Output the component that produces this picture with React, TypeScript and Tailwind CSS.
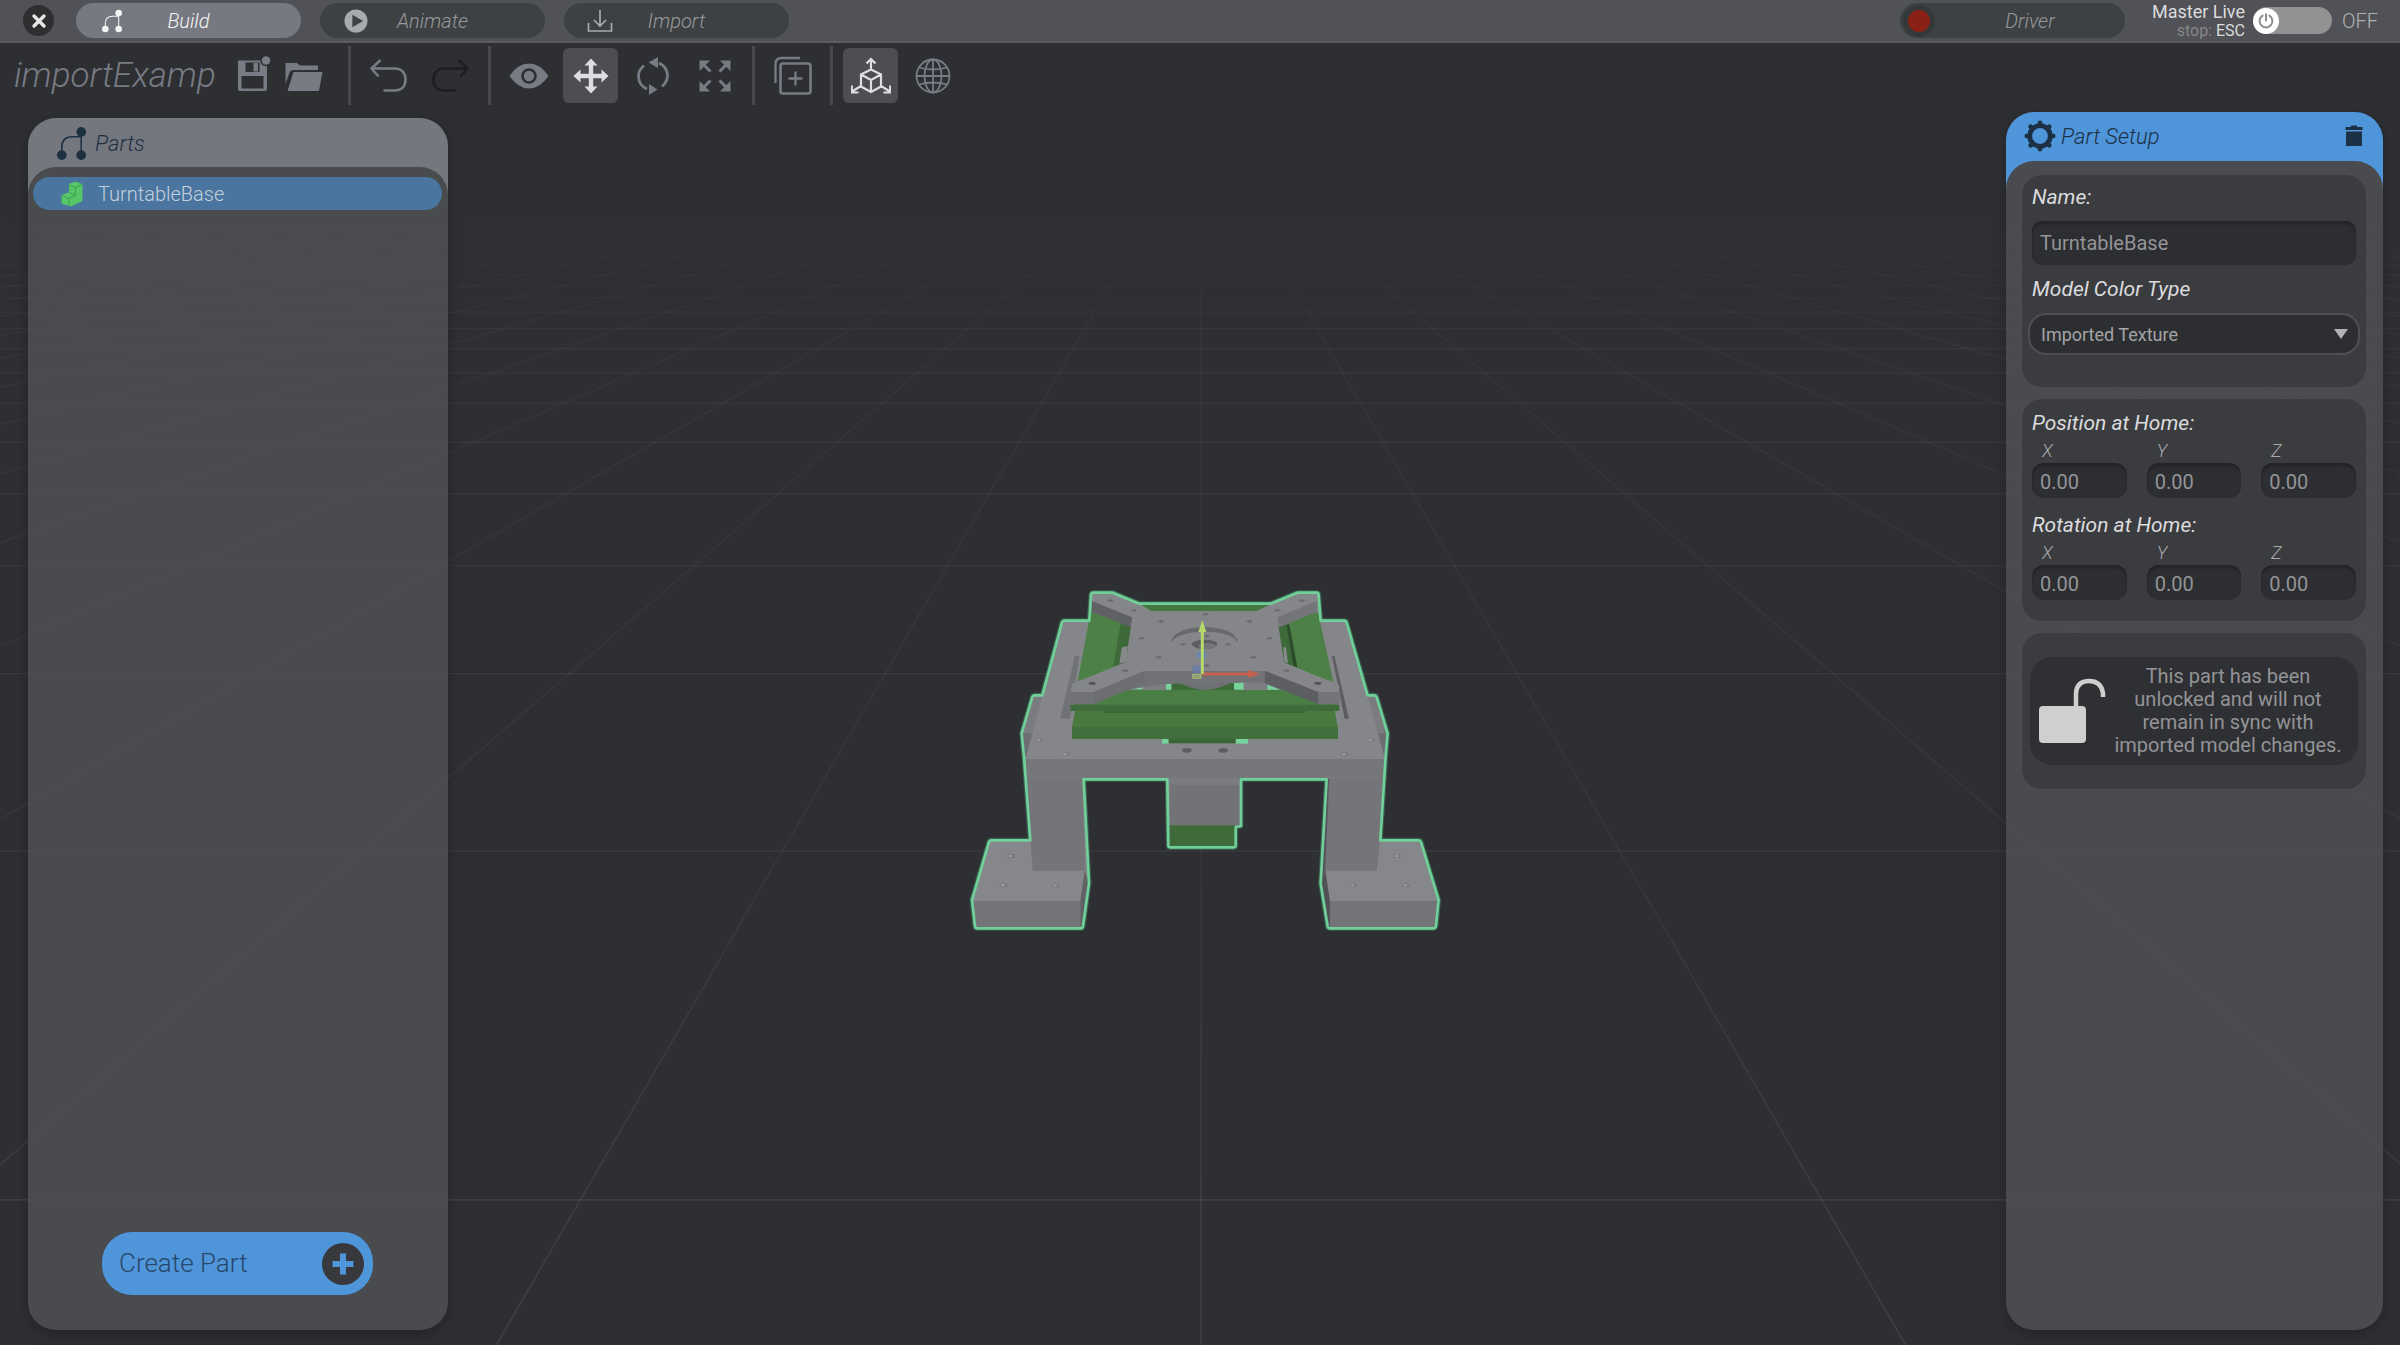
import React, { useId, useState } from "react";

const GRID_ROWS = Array.from({ length: 34 }, (_, n) => 128 + 1 / (0.000933 + 0.00045 * n));
const GRID_COLS = Array.from({ length: 41 }, (_, i) => i - 20);

const PLATE_HOLES = [
  [480, 92], [1054, 92], [550, 121], [980, 121], [765, 133], [632, 154], [897, 154],
  [573, 205], [957, 205], [698, 223], [832, 223], [625, 262], [908, 262], [525, 302],
  [1008, 302], [768, 287], [768, 198],
];

const FOOT_HOLES = [
  [183, 858], [161, 946], [317, 946], [1343, 858], [1210, 946], [1368, 946],
  [267, 511], [347, 553], [1263, 511], [1184, 553],
];

const OUTLINE =
  "M430 68H488L568 101H962L1042 68H1099Q1106 68 1106 75L1112 152H1183Q1188 152 1190 157L1253 376H1273Q1278 376 1280 381L1313 490L1307 560L1291 811H1406Q1411 811 1413 816L1466 990L1458 1068Q1457 1075 1450 1075H1140Q1134 1075 1133 1069L1112 940L1130 628H873V768L857 771V826Q857 832 851 832H661Q655 832 655 826L652 628H401L417 940L399 1069Q398 1075 392 1075H82Q76 1075 75 1069L66 990L117 816Q119 811 124 811H241L222 560L215 490L247 381Q249 376 254 376H277L336 157Q338 152 343 152H418L423 75Q424 68 430 68Z";

function Model() {
  return (
    <g transform="translate(950 570) scale(0.3333)">
      <path d={OUTLINE} fill="none" stroke="#4fbf7d" strokeWidth="15" strokeLinejoin="round" opacity="0.35" />
      <path d={OUTLINE} fill="#808184" />
      {/* Feet */}
      <path d="M119 811H250V902H404L391 993H66Z" fill="#86878a" />
      <path d="M1411 811H1280V902H1126L1140 993H1466Z" fill="#86878a" />
      <path d="M68 993H391V1075H76Z" fill="#737477" />
      <path d="M1140 993H1464L1457 1075H1140Z" fill="#737477" />
      <path d="M404 902L417 940L398 1075H391V993Z" fill="#606165" />
      <path d="M1126 902L1140 993V1075H1135L1112 940Z" fill="#505155" />
      {/* Legs */}
      <path d="M228 624H397L405 902H248L241 811Z" fill="#747578" />
      <path d="M1138 624H1304L1291 811L1280 902H1126Z" fill="#747578" />
      <path d="M1130 624H1138L1126 902L1115 940Z" fill="#55565a" />
      {/* Deck */}
      <path d="M249 376H277L228 560L215 490Z" fill="#7b7c7f" />
      <path d="M1253 376H1278L1313 490L1305 560Z" fill="#7b7c7f" />
      <path d="M218 490H247L228 560H222Z" fill="#6c6d70" />
      <path d="M1283 490H1311L1306 560H1300Z" fill="#6c6d70" />
      <path d="M338 152H1188L1305 567H228Z" fill="#858689" />
      <path d="M228 567H1305L1303 626H230Z" fill="#757679" />
      <path d="M230 624H1303" stroke="#808184" strokeWidth="2" />
      <path d="M375 257H388L360 446H330Z" fill="#717275" />
      <path d="M1146 257H1153L1197 446H1184Z" fill="#5b5c60" />
      {/* Rear rail and side rails */}
      <path d="M568 104H962L920 125H604Z" fill="#467640" />
      <path d="M422 126L545 165L505 285L382 340Z" fill="#4d8046" />
      <path d="M512 158L545 165L530 275L490 290Z" fill="#3d6a38" />
      <path d="M1104 126L985 165L1010 285L1150 336Z" fill="#4d8046" />
      <path d="M985 168L1018 160L1042 292L1003 278Z" fill="#3d6a38" />
      <path d="M1010 165H1018L1042 292L1030 288Z" fill="#2c4c2b" />
      <path d="M516 232L533 228L528 276L508 280Z" fill="#88898c" />
      <path d="M1000 232H1008L1014 280L1003 276Z" fill="#88898c" />
      {/* Carriage below the plate */}
      <path d="M540 335H1000V360H540Z" fill="#7d7e81" />
      <path d="M664 337H852V360H664Z" fill="#3d6a38" />
      <path d="M690 340H840Q800 360 765 360T690 340Z" fill="#6f7073" />
      <g fill="#74d49c">
        <path d="M545 358L578 342V358Z" />
        <path d="M648 337H664V359H648Z" />
        <path d="M852 337H881V359H852Z" />
        <path d="M952 344L990 359H952Z" />
        <path d="M636 506H656V521H636Z" />
        <path d="M857 506H894V521H857Z" />
      </g>
      {/* Front rail */}
      <path d="M510 360H1020L1168 405H362Z" fill="#4b7e44" />
      <path d="M362 404H1168V423H362Z" fill="#3f6c3a" />
      <path d="M375 423H1155L1163 471H366Z" fill="#49793f" />
      <path d="M455 424H1072L1060 429H465Z" fill="#3b6536" />
      <path d="M366 470H1164V507H366Z" fill="#42703c" />
      <path d="M656 507H857V520H656Z" fill="#3b6535" />
      {/* Top plate */}
      <path d="M425 92V126L545 172L547 142Z" fill="#606165" />
      <path d="M1101 92V126L988 172L982 142Z" fill="#747578" />
      <path d="M584 302H944V336Q855 338 830 341H690Q660 337 520 362Z" fill="#727376" />
      <path d="M425 92L430 71H488L568 101L604 123H920L962 103L1042 71H1100L1101 92L982 142L1000 277L1168 346V368L1105 366L944 302H584L430 366L361 368L366 341L527 277L547 142Z" fill="#85868a" />
      <path d="M361 366H430V403H361Z" fill="#717275" />
      <path d="M430 366L584 302V339L430 403Z" fill="#6d6e71" />
      <path d="M1105 366H1169V403H1105Z" fill="#747578" />
      <path d="M944 302L1105 366V403L944 339Z" fill="#5d5e62" />
      <path d="M667 214C667 158 861 158 861 214C840 176 690 176 667 214Z" fill="#68696c" />
      <path d="M667 206V214M861 206V214" stroke="#5d5e62" strokeWidth="3" />
      <ellipse cx="764" cy="223" rx="38" ry="14" fill="#5c5d60" />
      <ellipse cx="772" cy="228" rx="26" ry="9" fill="#737477" />
      {PLATE_HOLES.map(([x, y]) => (
        <g key={`${x}-${y}`}>
          <ellipse cx={x} cy={y} rx="10" ry="4" fill="#77787b" />
          <ellipse cx={x + 3} cy={y} rx="6" ry="3" fill="#68696c" />
        </g>
      ))}
      <ellipse cx="427" cy="340" rx="11" ry="5" fill="#55565a" />
      <ellipse cx="1104" cy="340" rx="11" ry="5" fill="#55565a" />
      <ellipse cx="711" cy="541" rx="14" ry="7" fill="#5c5d60" />
      <ellipse cx="820" cy="541" rx="14" ry="7" fill="#5c5d60" />
      {FOOT_HOLES.map(([x, y]) => (
        <g key={`${x}-${y}`}>
          <ellipse cx={x} cy={y} rx="11" ry="6" fill="#77787b" />
          <ellipse cx={x - 2} cy={y} rx="6" ry="4" fill="#97989b" />
        </g>
      ))}
      {/* Motor block */}
      <path d="M656 626H873V645H660Z" fill="#7b7c7f" />
      <path d="M660 644H870V766H660Z" fill="#727376" />
      <path d="M658 766H855V830H658Z" fill="#3f6a39" />
      <path d={OUTLINE} fill="none" stroke="#70d09a" strokeWidth="8" strokeLinejoin="round" />
      {/* Move gizmo */}
      <path d="M741 244H768V265H741Z" fill="#5d86c4" opacity="0.6" />
      <path d="M728 287H755V309H728Z" fill="#6479b0" opacity="0.75" />
      <path d="M728 313H753V325H728Z" fill="#8f9f73" stroke="#bccb78" strokeWidth="2" />
      <path d="M757 312H900" stroke="#c4624f" strokeWidth="9" />
      <path d="M895 300L931 312L895 324Z" fill="#c4624f" />
      <path d="M757 312V180" stroke="#b4da6e" strokeWidth="9" />
      <path d="M745 186L757 150L769 186Z" fill="#b4da6e" />
    </g>
  );
}

function Viewport() {
  return (
    <svg
      className="absolute inset-0 h-full w-full"
      viewBox="0 0 2400 1345"
      preserveAspectRatio="xMidYMid slice"
      role="img"
      aria-label="3D view of TurntableBase"
    >
      <defs>
        <linearGradient id="fade" gradientUnits="userSpaceOnUse" x1="0" y1="210" x2="0" y2="1345">
          <stop offset="0" stopColor="#ffffff" stopOpacity="0" />
          <stop offset="0.12" stopColor="#ffffff" stopOpacity="0.04" />
          <stop offset="0.6" stopColor="#ffffff" stopOpacity="0.06" />
          <stop offset="1" stopColor="#ffffff" stopOpacity="0.12" />
        </linearGradient>
      </defs>
      <g fill="url(#fade)">
        {GRID_ROWS.map((y) => (
          <path key={y} d={`M0 ${y - 0.6}H2400V${y + 0.6}H0Z`} />
        ))}
        {GRID_COLS.map((k) => {
          const far = 1201 + k * 0.579 * 80;
          const near = 1201 + k * 0.579 * 1217;
          const half = 0.7 * Math.sqrt(1 + (k * 0.579) ** 2);
          return (
            <path
              key={k}
              fillOpacity="0.75"
              d={`M${far - half} 208L${far + half} 208L${near + half} 1345L${near - half} 1345Z`}
            />
          );
        })}
      </g>
      <Model />
    </svg>
  );
}

function NodesIcon({ className }: { className: string }) {
  return (
    <svg viewBox="0 0 30 36" className={className} aria-hidden="true">
      <path d="M5 30V22Q5 11 16 11H25M25 6V30" fill="none" stroke="currentColor" strokeWidth="1.6" />
      <circle cx="25" cy="6" r="5" fill="currentColor" />
      <circle cx="5" cy="30" r="5" fill="currentColor" />
      <circle cx="25" cy="30" r="5" fill="currentColor" />
    </svg>
  );
}

function ModeTab({ label, icon, active }: { label: string; icon: React.ReactNode; active?: boolean }) {
  return (
    <button
      type="button"
      aria-pressed={!!active}
      className={
        "grid h-[35px] w-[225px] grid-cols-[72px_1fr_72px] items-center rounded-full text-xl font-light italic " +
        (active ? "bg-[#777982] text-[#f4f4f5]" : "bg-[#3d4143] text-[#97999c]")
      }
    >
      <span className="flex justify-center">{icon}</span>
      <span>{label}</span>
    </button>
  );
}

function TopBar() {
  const [live, setLive] = useState(false);
  return (
    <header className="flex h-[43px] items-center gap-[19px] border-b-2 border-[#5b5c61] bg-[#515257] pr-[22px] pl-[23px]">
      <button
        type="button"
        aria-label="Close"
        className="mr-[3px] flex size-[31px] items-center justify-center rounded-full bg-[#2e2f31] text-[#e6e6e6]"
      >
        <svg viewBox="0 0 16 16" className="size-4" aria-hidden="true">
          <path d="M3 3L13 13M13 3L3 13" stroke="currentColor" strokeWidth="3.4" strokeLinecap="round" />
        </svg>
      </button>
      <nav aria-label="Mode" className="flex gap-[19px]">
        <ModeTab label="Build" active icon={<NodesIcon className="h-6 w-5" />} />
        <ModeTab
          label="Animate"
          icon={
            <svg viewBox="0 0 24 24" className="size-6" aria-hidden="true">
              <circle cx="12" cy="12" r="11.5" fill="#a9aaab" />
              <path d="M8.4 5.8L19 12L8.4 18.2Z" fill="#3d4143" />
            </svg>
          }
        />
        <ModeTab
          label="Import"
          icon={
            <svg viewBox="0 0 26 24" className="h-6 w-[26px]" fill="none" stroke="#a9aaab" strokeWidth="1.7" aria-hidden="true">
              <path d="M13 1V17M7 11L13 17L19 11M1.5 14V22H24.500V14" />
            </svg>
          }
        />
      </nav>
      <button
        type="button"
        className="mr-2 ml-auto flex h-[35px] w-[225px] items-center rounded-full bg-[#3d4143] pl-[3px] text-xl font-light text-[#97999c] italic"
      >
        <span className="flex size-8 items-center justify-center rounded-full bg-[#343839]">
          <span className="size-[22px] rounded-full bg-[#8b2114]" />
        </span>
        <span className="flex-1">Driver</span>
      </button>
      <label className="flex items-center gap-2">
        <span className="flex flex-col text-right">
          <span className="text-lg leading-5 text-[#dcdcdd]">Master Live</span>
          <span className="text-base leading-[18px] text-[#85868a]">
            stop: <span className="text-[#dcdcdd]">ESC</span>
          </span>
        </span>
        <input
          type="checkbox"
          role="switch"
          className="peer sr-only"
          checked={live}
          onChange={(e) => setLive(e.target.checked)}
        />
        <span className="flex h-[27px] w-[79px] items-center rounded-full bg-[#929292] peer-checked:justify-end">
          <span className="flex size-[26px] items-center justify-center rounded-full bg-white">
            <svg viewBox="0 0 16 16" className="size-4" fill="none" stroke="#8c8c8c" strokeWidth="2" strokeLinecap="round" aria-hidden="true">
              <path d="M8 1.200V7.500M4.600 2.600A6.400 6.400 0 1 0 11.400 2.600" />
            </svg>
          </span>
        </span>
        <span className="w-[38px] pl-0.5 text-xl font-light text-[#b0b1b3]">{live ? "ON" : "OFF"}</span>
      </label>
    </header>
  );
}

function Tool({
  label,
  children,
  active,
  disabled,
  narrow,
}: {
  label: string;
  children: React.ReactNode;
  active?: boolean;
  disabled?: boolean;
  narrow?: boolean;
}) {
  return (
    <button
      type="button"
      aria-label={label}
      disabled={disabled}
      className={
        "flex h-[55px] items-center justify-center rounded-md " +
        (narrow ? "w-11 " : "w-[55px] ") +
        (active ? "bg-[#4d4e52] text-[#dedee0]" : disabled ? "text-[#1d1e20]" : "text-[#787a84]")
      }
    >
      <svg viewBox="0 0 40 40" className="size-10" fill="none" stroke="currentColor" aria-hidden="true">
        {children}
      </svg>
    </button>
  );
}

function Divider() {
  return <div className="mx-[10px] h-[59px] w-[3px] bg-[#48494e]" />;
}

function Toolbar() {
  return (
    <div role="toolbar" aria-label="Scene tools" className="flex h-[65px] items-center pl-[14px]">
      <input
        aria-label="Project name"
        defaultValue="importExamp"
        className="w-[217px] bg-transparent pt-0.5 text-[35px] font-light text-[#787a84] italic outline-none"
      />
      <div className="flex gap-[7px] pr-3">
        <Tool label="Save" narrow>
          <path d="M5 4.500H31L34 7.500V33Q34 35 32 35H7Q5 35 5 33ZM8.500 20V32.500H30.500V20ZM12.500 6.500V16H26.500V6.500Z" fill="currentColor" fillRule="evenodd" stroke="none" />
          <path d="M20.500 7H25V15.500H20.500Z" fill="currentColor" stroke="none" />
          <circle cx="33" cy="4.500" r="5.800" fill="#2e2f33" stroke="none" />
          <circle cx="33" cy="4.500" r="4.300" fill="currentColor" stroke="none" />
        </Tool>
        <Tool label="Open" narrow>
          <path d="M1.500 7H13L16 9.500H34V14H9Q6.500 14 5.500 16.500L1.500 28ZM9.500 16H38.500L35 35H3.500Z" fill="currentColor" stroke="none" />
        </Tool>
      </div>
      <Divider />
      <div className="flex gap-[7px]">
        <Tool label="Undo">
          <path d="M11.500 4L2.500 12.500L9.500 20.500M2.500 12.500H26C33.500 12.500 36.500 18 36.500 23.500C36.500 30 33 34.500 26 34.500H14.500" strokeWidth="2.600" strokeLinejoin="round" />
        </Tool>
        <Tool label="Redo" disabled>
          <path d="M27.500 4L36.500 12.500L29.500 20.500M36.500 12.500H13C5.500 12.500 2.500 18 2.500 23.500C2.500 30 6 34.500 13 34.500H24.500" strokeWidth="2.600" strokeLinejoin="round" />
        </Tool>
      </div>
      <Divider />
      <div className="flex gap-[7px]">
        <Tool label="Visibility">
          <path d="M0.500 20Q9 7.500 20 7.500T39.500 20Q31 32.500 20 32.500T0.500 20Z" fill="currentColor" stroke="none" />
          <circle cx="20" cy="20" r="6.500" stroke="#2e2f33" strokeWidth="2.600" />
        </Tool>
        <Tool label="Move" active>
          <path d="M20 2.500L26.500 9.500H22.200V17.800H30.500V13.500L37.500 20L30.500 26.500V22.200H22.200V30.500H26.500L20 37.500L13.500 30.500H17.800V22.200H9.500V26.500L2.500 20L9.500 13.500V17.800H17.800V9.500H13.500Z" fill="currentColor" stroke="none" />
        </Tool>
        <Tool label="Rotate">
          <path d="M11 9.500C3 16 3.500 28 14 33M29 30.500C37 24 36.500 12 26 7" strokeWidth="2.800" />
          <path d="M15.500 6.500L25 1V12ZM24.500 33.500L16 28V39Z" fill="currentColor" stroke="none" />
        </Tool>
        <Tool label="Scale">
          <path d="M7 7L15.500 15.500M33 7L24.500 15.500M7 33L15.500 24.500M33 33L24.500 24.500" strokeWidth="3" />
          <path d="M4.500 4.500H15L4.500 15ZM35.500 4.500H25L35.500 15ZM4.500 35.500H15L4.500 25ZM35.500 35.500H25L35.500 25Z" fill="currentColor" stroke="none" />
        </Tool>
      </div>
      <Divider />
      <Tool label="Duplicate">
        <rect x="7.500" y="7.500" width="30" height="30" rx="2.500" strokeWidth="2.600" />
        <path d="M2.500 27V8Q2.500 2 8.500 2H27M22.500 15.500V29.500M15.500 22.500H29.500" strokeWidth="2.300" />
      </Tool>
      <Divider />
      <div className="flex gap-[7px]">
        <Tool label="Local axes" active>
          <path d="M20 13.500L30 18.500V30.500L20 36L10 30.500V18.500ZM10 18.500L20 24L30 18.500M20 24V36M20 13.500V3.500M15.500 7.500L20 3L24.500 7.500M10 30L1 35.500M0.800 29.500V36.500H7.500M30 30L39 35.500M39.200 29.500V36.500H32.500" strokeWidth="2.200" />
        </Tool>
        <Tool label="Global axes">
          <circle cx="20" cy="20" r="16.500" strokeWidth="1.800" />
          <ellipse cx="20" cy="20" rx="8.500" ry="16.500" strokeWidth="1.800" />
          <path d="M20 3.500V36.500M3.500 20H36.500M6 11.500Q20 15.500 34 11.500M6 28.500Q20 24.500 34 28.500" strokeWidth="1.800" />
        </Tool>
      </div>
    </div>
  );
}

const bodyClass =
  "relative -mt-7 flex flex-1 flex-col rounded-t-[28px] bg-[linear-gradient(#4a4b4f_28px,#4d4e52e6_28px)]";

function PartsPanel() {
  return (
    <aside className="mt-[10px] flex w-[420px] flex-col overflow-hidden rounded-[28px] shadow-[0_4px_14px_rgba(0,0,0,0.25)]">
      <div className="flex h-[77px] items-start bg-[#75777f] pt-2 pl-7 text-[#1d3042]">
        <NodesIcon className="h-[35px] w-[31px]" />
        <h2 className="pl-2 text-[22px] leading-9 font-light italic">Parts</h2>
      </div>
      <div className={bodyClass}>
        <ul className="flex-1 pt-[10px] pr-[6px] pl-[5px]">
          <li>
            <button
              type="button"
              aria-current="true"
              className="flex h-[33px] w-full items-center rounded-full bg-[#4a759f] pl-7 text-xl font-light text-[#c3d0de]"
            >
              <svg viewBox="0 0 22 26" className="h-[26px] w-[22px]" aria-hidden="true">
                <path d="M8 4Q8 3 9 2.600L14 0.800Q15 0.500 16 0.900L21 3Q21.500 3.300 21.500 4V19Q21.500 20 20.500 20.500L10 25.500L1.500 23Q0.500 22.500 0.500 21.500V15Q0.500 14 1.500 13.600L7 11.700Q8 11.300 8 10Z" fill="#55c766" />
                <path d="M8 4L14.500 6.500L21.500 3.500M14.500 6.500V14.500L8 17.500L0.500 14.500M8 17.500V25M8 11.500L14 14" fill="none" stroke="#3a9151" strokeWidth="0.800" />
              </svg>
              <span className="pl-[15px]">TurntableBase</span>
            </button>
          </li>
        </ul>
        <button
          type="button"
          className="mr-[75px] mb-[35px] ml-[74px] flex h-[63px] items-center justify-between rounded-[30px] bg-[#4f95da] pr-[9px] pl-[17px] text-[26px] font-light text-[#28486a]"
        >
          Create Part
          <svg viewBox="0 0 42 42" className="size-[42px]" aria-hidden="true">
            <circle cx="21" cy="21" r="21" fill="#38393d" />
            <path d="M21 10.500V31.500M10.500 21H31.500" stroke="#4f95da" strokeWidth="6" />
          </svg>
        </button>
      </div>
    </aside>
  );
}

const fieldClass =
  "bg-[#2d2e31] text-xl text-[#939497] shadow-[inset_0_3px_2px_#232427] outline-none";

const headingClass = "text-[21px] leading-6 text-[#dcdcde] italic";

function Vector({ title }: { title: string }) {
  const id = useId();
  return (
    <fieldset>
      <legend className={headingClass}>{title}</legend>
      <div className="mt-1 grid grid-cols-3 gap-x-5">
        {["X", "Y", "Z"].map((axis) => (
          <div key={axis} className="flex flex-col">
            <label htmlFor={id + axis} className="pl-2.5 text-lg leading-6 font-light text-[#a9aaad] italic">
              {axis}
            </label>
            <input
              id={id + axis}
              defaultValue="0.00"
              className={"h-[35px] w-full min-w-0 rounded-xl pt-0.5 pl-2 " + fieldClass}
            />
          </div>
        ))}
      </div>
    </fieldset>
  );
}

const cardClass = "rounded-[20px] bg-[#3b3c40]";

function SetupPanel() {
  return (
    <aside className="mt-1 flex w-[377px] flex-col overflow-hidden rounded-[28px] shadow-[0_4px_14px_rgba(0,0,0,0.25)]">
      <div className="flex h-[77px] items-start bg-[#4f95da] pt-2 pr-5 pl-[18px] text-[#1c3046]">
        <svg viewBox="0 0 32 32" className="size-8" aria-hidden="true">
          <circle cx="16" cy="16" r="10.300" fill="none" stroke="currentColor" strokeWidth="4.800" />
          <g stroke="currentColor" strokeWidth="4.600" strokeLinecap="round">
            {[0, 45, 90, 135, 180, 225, 270, 315].map((a) => (
              <path key={a} d="M16 2.800V5" transform={`rotate(${a} 16 16)`} />
            ))}
          </g>
        </svg>
        <h2 className="flex-1 pl-[5px] text-[22px] leading-[34px] font-light italic">Part Setup</h2>
        <button type="button" aria-label="Delete part" className="flex h-8 items-center">
          <svg viewBox="0 0 18 22" className="h-[22px] w-[18px]" fill="currentColor" aria-hidden="true">
            <path d="M1 6.500H17V21H1ZM0.500 2H6V0.500H12V2H17.500V5H0.500Z" />
          </svg>
        </button>
      </div>
      <div className={bodyClass + " gap-3 pt-[14px] pr-[17px] pl-4"}>
        <section className={cardClass + " flex flex-col px-[10px] pt-[10px] pb-8"}>
          <label htmlFor="part-name" className={headingClass}>
            Name:
          </label>
          <input
            id="part-name"
            defaultValue="TurntableBase"
            className={"mt-3 h-11 rounded-[10px] pl-2 " + fieldClass}
          />
          <label htmlFor="color-type" className={"mt-3 " + headingClass}>
            Model Color Type
          </label>
          <div className="relative -mx-1 mt-3 flex">
            <select
              id="color-type"
              className="h-[42px] flex-1 appearance-none rounded-[18px] border-2 border-[#4e4f54] bg-[#2d2e31] pt-0.5 pl-[11px] text-lg text-[#a3a4a7] outline-none"
            >
              <option>Imported Texture</option>
            </select>
            <svg viewBox="0 0 14 10" className="pointer-events-none absolute top-4 right-3 h-[10px] w-[14px]" aria-hidden="true">
              <path d="M0 0H14L7 10Z" fill="#b0b1b3" />
            </svg>
          </div>
        </section>
        <section className={cardClass + " flex flex-col gap-[15px] px-[10px] pt-3 pb-[21px]"}>
          <Vector title="Position at Home:" />
          <Vector title="Rotation at Home:" />
        </section>
        <section className={cardClass + " px-2 py-6"}>
          <div className="flex items-center rounded-[22px] bg-[#2f3033] py-2 pr-3 pl-2">
            <svg viewBox="0 0 68 66" className="h-[66px] w-[68px] shrink-0" aria-hidden="true">
              <rect x="1" y="28" width="47" height="37" rx="4" fill="#cfcfd0" />
              <path d="M38 30V15Q39 3 51 3T65 15V19" fill="none" stroke="#cfcfd0" strokeWidth="4.500" />
            </svg>
            <p className="flex-1 pl-1 text-center text-xl leading-[23px] text-[#939497]">
              This part has been
              <br />
              unlocked and will not
              <br />
              remain in sync with
              <br />
              imported model changes.
            </p>
          </div>
        </section>
      </div>
    </aside>
  );
}

export default function App() {
  return (
    <div className="relative min-h-screen bg-[#2e2f33] font-['Roboto',sans-serif]">
      <Viewport />
      <div className="relative flex min-h-screen flex-col">
        <TopBar />
        <Toolbar />
        <main className="flex flex-1 justify-between pr-[17px] pb-[15px] pl-7">
          <PartsPanel />
          <SetupPanel />
        </main>
      </div>
    </div>
  );
}
